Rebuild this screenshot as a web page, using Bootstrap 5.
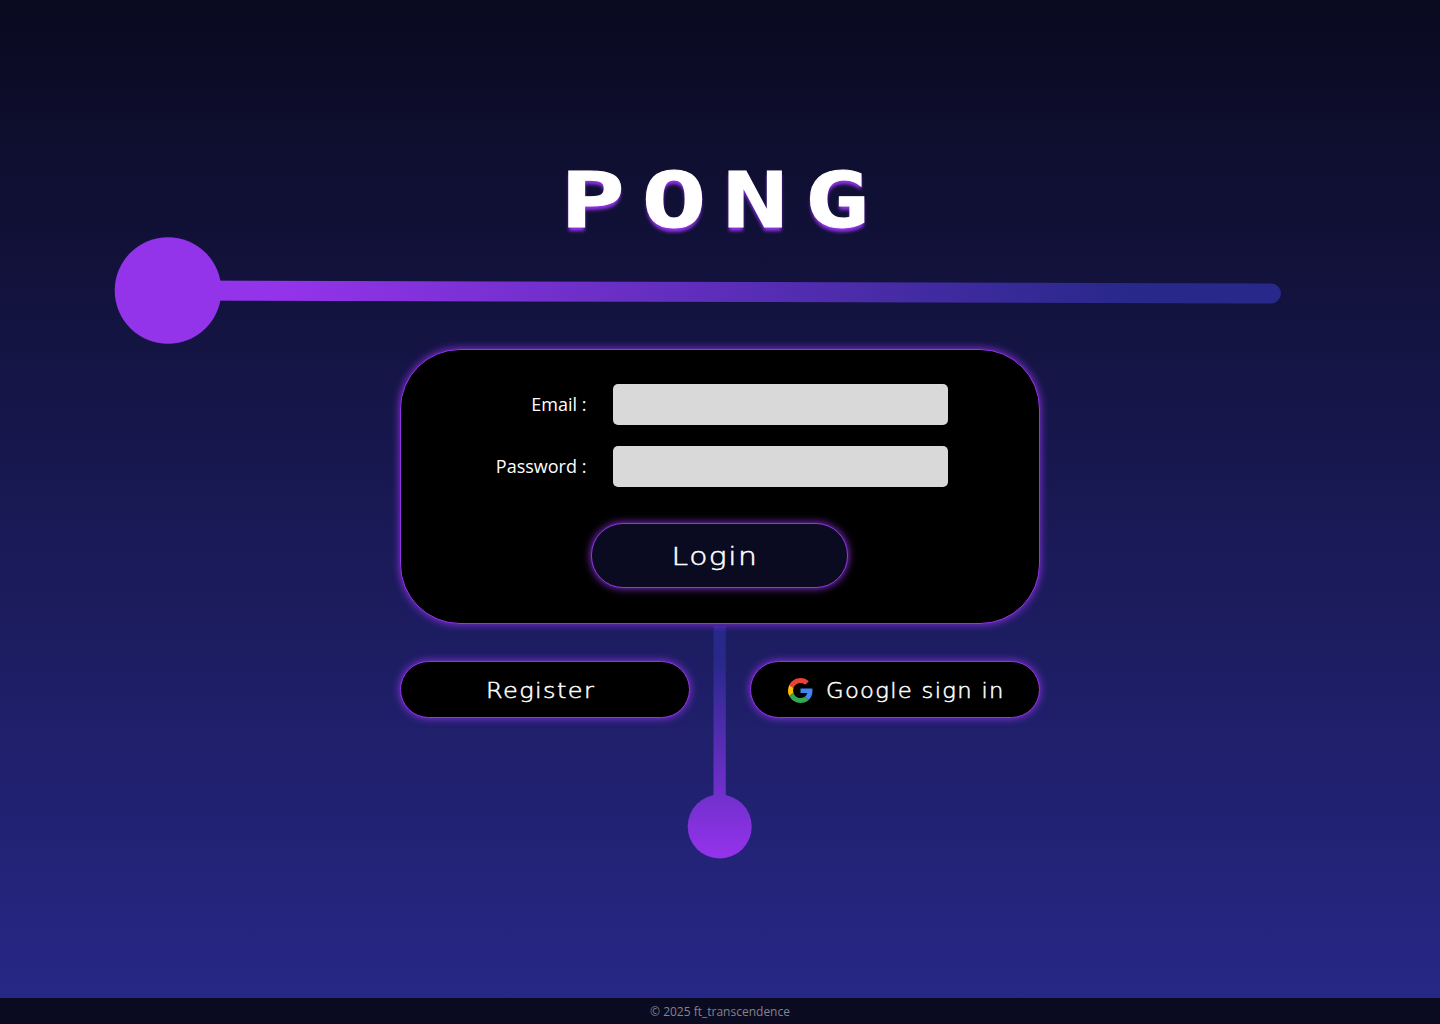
<!DOCTYPE html>
<html lang="en">
<head>
<meta charset="utf-8">
<meta name="viewport" content="width=device-width, initial-scale=1">
<title>PONG</title>
<link href="https://cdn.jsdelivr.net/npm/bootstrap@5.3.0/dist/css/bootstrap.min.css" rel="stylesheet">
<style>
  body { font-family: "Open Sans", "Noto Sans", sans-serif; background: #0a0a20; }
  .stage { background: linear-gradient(180deg, #0a0a20 0%, #272786 100%); }
  .art { inset: 0; width: 1440px; height: 998px; }
  .title { margin: 155px 0 0; height: 92px; line-height: 92px; font-family: "DejaVu Sans Mono", monospace; font-weight: 700; font-size: 76.5px; letter-spacing: 12px; color: #fff; text-shadow: 0 4px 3px #9333ea; -webkit-text-stroke: 1px #fff; }
  .title span { display: inline-block; transform: scaleX(1.4); margin-left: 7px; }
  .glow { border: 1px solid #9333ea; box-shadow: 0 0 8px #9333ea; }
  .panel { width: 640px; height: 275px; margin-top: 102px; border-radius: 60px; background: #000; padding-top: 34px; }
  .field-row { height: 41px; margin-bottom: 21px; }
  .field-row label { width: 185.4px; margin-right: 26.6px; font-size: 18px; color: #fff; text-align: right; white-space: nowrap; }
  .field-row .form-control { width: 335px; height: 41px; background: #d9d9d9; border: 0; border-radius: 5px; }
  .pill { font-family: "DejaVu Sans", sans-serif; font-weight: 200; color: #fff; border-radius: 32px; letter-spacing: 1.2px; -webkit-text-stroke: .5px #fff; }
  .pill:hover { color: #fff; border-color: #9333ea; }
  .pill span { display: inline-block; }
  .btn-login { width: 257px; height: 65px; margin: 15px 0 0 190px; background: #0a0a20; font-size: 24px; padding: 2px 10px 0 0; }
  .btn-side { width: 290px; height: 57px; background: #000; font-size: 20.5px; padding: 3px 8px 0 0; }
  .btn-google { padding: 1px 0 0 37px; }
  .word-login { transform: scaleX(1.24); }
  .word-register { transform: scaleX(1.17); }
  .word-google { transform: scaleX(1.105); transform-origin: left; margin-left: 13px; padding-top: 2px; white-space: nowrap; }
  .actions { width: 640px; margin-top: 37px; }
  .foot { height: 26px; background: #0a0a20; color: #848489; font-size: 12px; line-height: 27px; }
</style>
</head>
<body class="vh-100 overflow-hidden d-flex flex-column">
<main class="stage position-relative flex-grow-1">
  <svg class="art position-absolute" viewBox="0 0 1440 998" aria-hidden="true">
    <defs>
      <linearGradient id="paddle" gradientUnits="userSpaceOnUse" x1="290" y1="0" x2="1130" y2="0"><stop stop-color="#9333ea"/><stop offset="1" stop-color="#28288a"/></linearGradient>
      <linearGradient id="pin" gradientUnits="userSpaceOnUse" x1="0" y1="660" x2="0" y2="855"><stop stop-color="#28288a"/><stop offset="1" stop-color="#9333ea"/></linearGradient>
    </defs>
    <path d="M168 290.5 1271 293.5" stroke="url(#paddle)" stroke-width="20" stroke-linecap="round"/>
    <circle cx="168" cy="290.5" r="53.3" fill="#9333ea"/>
    <path d="M713.5 626h12.3v170h-12.3z" fill="url(#pin)"/>
    <circle cx="719.7" cy="826.5" r="32" fill="url(#pin)"/>
  </svg>
  <div class="position-relative d-flex flex-column align-items-center">
    <h1 class="title"><span>PONG</span></h1>
    <form class="panel glow">
      <div class="field-row d-flex align-items-center"><label for="email">Email :</label><input class="form-control" id="email" type="email"></div>
      <div class="field-row d-flex align-items-center"><label for="password">Password :</label><input class="form-control" id="password" type="password"></div>
      <button class="btn pill glow btn-login" type="button"><span class="word-login">Login</span></button>
    </form>
    <div class="actions d-flex justify-content-between">
      <button class="btn pill glow btn-side" type="button"><span class="word-register">Register</span></button>
      <button class="btn pill glow btn-side btn-google d-flex align-items-center" type="button">
        <svg class="flex-shrink-0" width="25" height="25" viewBox="0 0 48 48" aria-hidden="true"><path fill="#EA4335" d="M24 9.5c3.54 0 6.71 1.22 9.21 3.6l6.85-6.85C35.9 2.38 30.47 0 24 0 14.62 0 6.51 5.38 2.56 13.22l7.98 6.19C12.43 13.72 17.74 9.5 24 9.5z"/><path fill="#4285F4" d="M46.98 24.55c0-1.57-.15-3.09-.38-4.55H24v9.02h12.94c-.58 2.96-2.26 5.48-4.78 7.18l7.73 6c4.51-4.18 7.09-10.36 7.09-17.65z"/><path fill="#FBBC05" d="M10.53 28.59c-.48-1.45-.76-2.99-.76-4.59s.27-3.14.76-4.59l-7.98-6.19C.92 16.46 0 20.12 0 24c0 3.88.92 7.54 2.56 10.78l7.97-6.19z"/><path fill="#34A853" d="M24 48c6.48 0 11.93-2.13 15.89-5.81l-7.73-6c-2.15 1.45-4.92 2.3-8.16 2.3-6.26 0-11.57-4.22-13.47-9.91l-7.98 6.19C6.51 42.62 14.62 48 24 48z"/></svg>
        <span class="word-google">Google sign in</span>
      </button>
    </div>
  </div>
</main>
<footer class="foot text-center flex-shrink-0">© 2025 ft_transcendence</footer>
<script src="https://cdn.jsdelivr.net/npm/bootstrap@5.3.0/dist/js/bootstrap.bundle.min.js"></script>
</body>
</html>
